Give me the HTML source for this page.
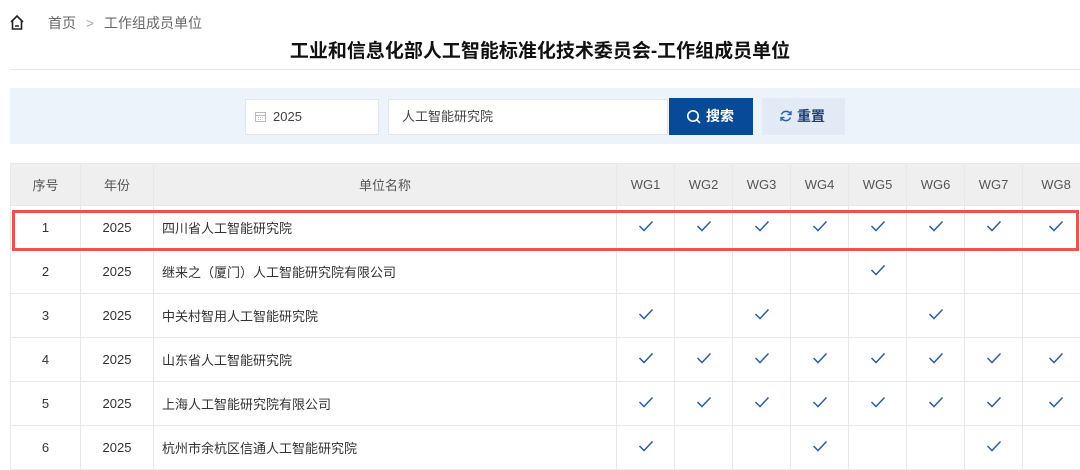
<!DOCTYPE html><html><head><meta charset="utf-8"><style>
*{margin:0;padding:0;box-sizing:border-box}
body{width:1080px;height:468px;overflow:hidden;background:#fff;font-family:"Liberation Sans","Noto Sans CJK SC",sans-serif;position:relative;color:#333}
.abs{position:absolute}
.bc{left:48px;top:13px;font-size:14px;color:#666}
.title{left:0;width:1080px;text-align:center;top:36px;font-size:19px;font-weight:bold;color:#111}
.hr{left:10px;right:0;top:69px;height:1px;background:#e6e6e6}
.bar{left:10px;width:1070px;top:88px;height:56px;background:#ecf3fb}
.inp{background:#fff;border:1px solid #e2e6ea;height:36px;top:99px;font-size:13px;color:#444;line-height:34px}
table{position:absolute;left:10px;top:163px;border-collapse:collapse;width:1080px;font-size:13px}
td,th{border:1px solid #e8e8e8;text-align:center;height:44px;padding:0}
th{background:#efefef;font-weight:normal;color:#555;height:42px}
td.n{text-align:left;padding-left:8px}
.c::after{content:"";display:inline-block;width:14px;height:10px;background:url('') ;}
.c{background-image:none}
</style></head><body>
<svg class="abs" style="left:9px;top:14px" width="16" height="17" viewBox="0 0 16 17"><path d="M2 8 L8 2 L14 8 M3.5 6.5 V15 H12.5 V6.5 M6 12 H10" fill="none" stroke="#222" stroke-width="1.6"/></svg>
<div class="abs bc">首页 <span style="color:#aaa;margin:0 6px">&gt;</span> 工作组成员单位</div>
<div class="abs title">工业和信息化部人工智能标准化技术委员会-工作组成员单位</div>
<div class="abs hr"></div>
<div class="abs bar"></div>
<div class="abs inp" style="left:245px;width:134px;padding-left:27px">2025</div>
<svg class="abs" style="left:255px;top:111px" width="11" height="11"><rect x="0.5" y="1.5" width="10" height="9" fill="none" stroke="#bbb"/><path d="M1 4.5H10M3 6.5h1M5 6.5h1M7 6.5h1M3 8.5h1M5 8.5h1" stroke="#bbb"/></svg>
<div class="abs inp" style="left:388px;width:280px;padding-left:13px">人工智能研究院</div>
<div class="abs" style="left:669px;top:98px;width:84px;height:37px;background:#064a98;color:#fff;font-size:14px;font-weight:bold;line-height:37px;padding-left:37px">搜索</div>
<svg class="abs" style="left:686px;top:109px" width="16" height="16"><circle cx="7" cy="7" r="5.2" fill="none" stroke="#fff" stroke-width="1.6"/><path d="M11 11 L14 14" stroke="#fff" stroke-width="1.6"/></svg>
<div class="abs" style="left:762px;top:98px;width:83px;height:37px;background:#e2ebf5;color:#1d3f7a;font-size:14px;font-weight:bold;line-height:37px;padding-left:35px">重置</div>
<svg class="abs" style="left:779px;top:109px" width="14" height="14" viewBox="0 0 14 14"><path d="M11.5 5 A5 5 0 0 0 2.5 5.5 M2.5 9 A5 5 0 0 0 11.5 8.5" fill="none" stroke="#2a5db0" stroke-width="1.5"/><path d="M12 2v3.5h-3.5M2 12V8.5h3.5" fill="none" stroke="#2a5db0" stroke-width="1.3"/></svg>
<svg width="0" height="0" style="position:absolute"><defs><symbol id="ck" viewBox="0 0 16 12"><path d="M1.5 6 L6 10.5 L14.5 1.5" fill="none" stroke="#2a5db0" stroke-width="1.5"/></symbol></defs></svg>
<table>
<tr><th style="width:70px">序号</th><th style="width:73px">年份</th><th style="width:463px">单位名称</th><th style="width:58px">WG1</th><th style="width:58px">WG2</th><th style="width:58px">WG3</th><th style="width:58px">WG4</th><th style="width:58px">WG5</th><th style="width:58px">WG6</th><th style="width:58px">WG7</th><th>WG8</th></tr>
<tr><td>1</td><td>2025</td><td class="n">四川省人工智能研究院</td><td><svg width="16" height="12"><use href="#ck"/></svg></td><td><svg width="16" height="12"><use href="#ck"/></svg></td><td><svg width="16" height="12"><use href="#ck"/></svg></td><td><svg width="16" height="12"><use href="#ck"/></svg></td><td><svg width="16" height="12"><use href="#ck"/></svg></td><td><svg width="16" height="12"><use href="#ck"/></svg></td><td><svg width="16" height="12"><use href="#ck"/></svg></td><td><svg width="16" height="12"><use href="#ck"/></svg></td></tr>
<tr><td>2</td><td>2025</td><td class="n">继来之（厦门）人工智能研究院有限公司</td><td></td><td></td><td></td><td></td><td><svg width="16" height="12"><use href="#ck"/></svg></td><td></td><td></td><td></td></tr>
<tr><td>3</td><td>2025</td><td class="n">中关村智用人工智能研究院</td><td><svg width="16" height="12"><use href="#ck"/></svg></td><td></td><td><svg width="16" height="12"><use href="#ck"/></svg></td><td></td><td></td><td><svg width="16" height="12"><use href="#ck"/></svg></td><td></td><td></td></tr>
<tr><td>4</td><td>2025</td><td class="n">山东省人工智能研究院</td><td><svg width="16" height="12"><use href="#ck"/></svg></td><td><svg width="16" height="12"><use href="#ck"/></svg></td><td><svg width="16" height="12"><use href="#ck"/></svg></td><td><svg width="16" height="12"><use href="#ck"/></svg></td><td><svg width="16" height="12"><use href="#ck"/></svg></td><td><svg width="16" height="12"><use href="#ck"/></svg></td><td><svg width="16" height="12"><use href="#ck"/></svg></td><td><svg width="16" height="12"><use href="#ck"/></svg></td></tr>
<tr><td>5</td><td>2025</td><td class="n">上海人工智能研究院有限公司</td><td><svg width="16" height="12"><use href="#ck"/></svg></td><td><svg width="16" height="12"><use href="#ck"/></svg></td><td><svg width="16" height="12"><use href="#ck"/></svg></td><td><svg width="16" height="12"><use href="#ck"/></svg></td><td><svg width="16" height="12"><use href="#ck"/></svg></td><td><svg width="16" height="12"><use href="#ck"/></svg></td><td><svg width="16" height="12"><use href="#ck"/></svg></td><td><svg width="16" height="12"><use href="#ck"/></svg></td></tr>
<tr><td>6</td><td>2025</td><td class="n">杭州市余杭区信通人工智能研究院</td><td><svg width="16" height="12"><use href="#ck"/></svg></td><td></td><td></td><td><svg width="16" height="12"><use href="#ck"/></svg></td><td></td><td></td><td><svg width="16" height="12"><use href="#ck"/></svg></td><td></td></tr>
</table>
<div class="abs" style="left:12px;top:210px;width:1067px;height:41px;border:3px solid #ef5050"></div>
</body></html>
